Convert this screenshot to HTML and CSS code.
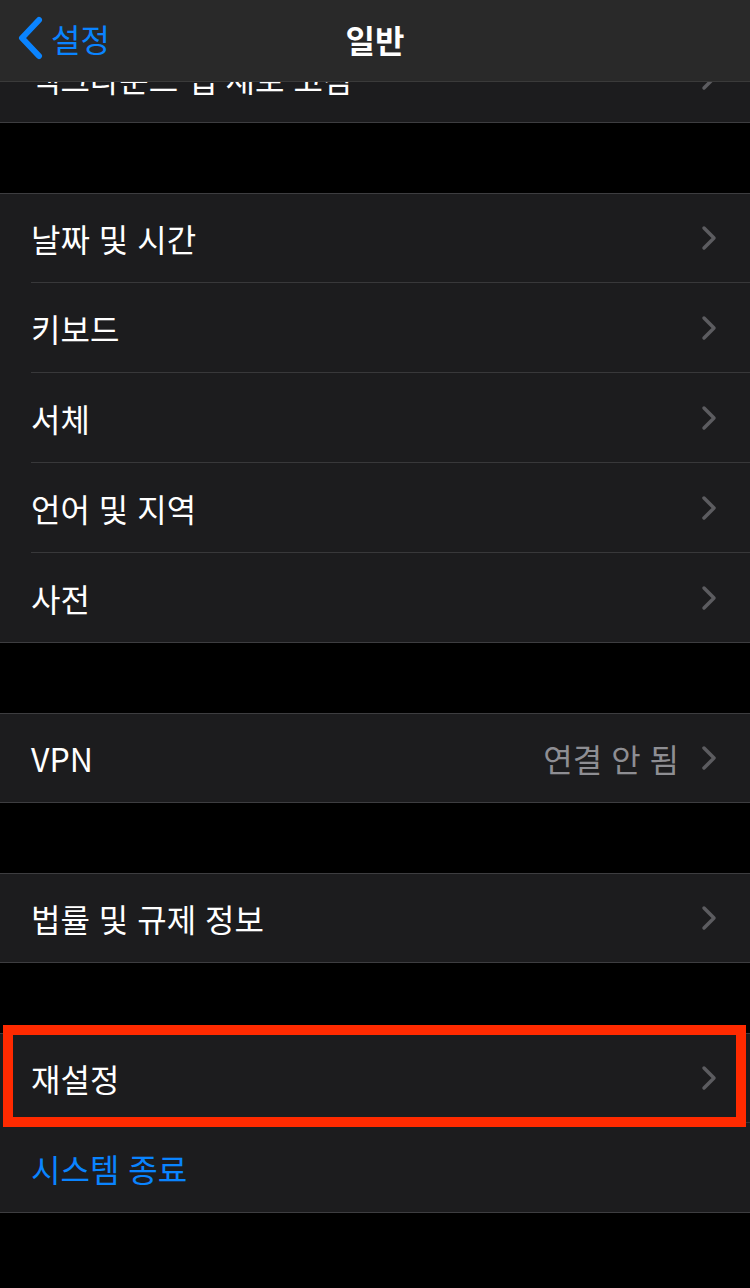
FILE: index.html
```html
<!DOCTYPE html>
<html lang="ko">

<head>
    <meta charset="UTF-8">
    <meta name="viewport" content="width=device-width, initial-scale=1.0">
    <title>일반</title>
    <link rel="stylesheet" href="styles.css">
</head>

<body>

    <div class="screen">
        <header class="navbar">
            <a class="back" href="#">
                <svg class="back-icon" width="26" height="44" viewBox="0 0 26 44">
                    <path d="M22 4 L5 22 L22 40" fill="none" stroke="#0a84ff" stroke-width="6" stroke-linecap="round" stroke-linejoin="round" />
                </svg>
                <span>설정</span>
            </a>
            <h1 class="title">일반</h1>
        </header>

        <main class="list">
            <section class="group group-top">
                <div class="row"><div class="row-inner"><span class="label">백그라운드 앱 새로 고침</span><span class="chevron"></span></div></div>
            </section>

            <section class="group">
                <div class="row"><div class="row-inner"><span class="label">날짜 및 시간</span><span class="chevron"></span></div></div>
                <div class="row"><div class="row-inner"><span class="label">키보드</span><span class="chevron"></span></div></div>
                <div class="row"><div class="row-inner"><span class="label">서체</span><span class="chevron"></span></div></div>
                <div class="row"><div class="row-inner"><span class="label">언어 및 지역</span><span class="chevron"></span></div></div>
                <div class="row"><div class="row-inner"><span class="label">사전</span><span class="chevron"></span></div></div>
            </section>

            <section class="group">
                <div class="row"><div class="row-inner"><span class="label">VPN</span><span class="value">연결 안 됨</span><span class="chevron"></span></div></div>
            </section>

            <section class="group">
                <div class="row"><div class="row-inner"><span class="label">법률 및 규제 정보</span><span class="chevron"></span></div></div>
            </section>

            <section class="group">
                <div class="row row-marked">
                    <div class="row-inner"><span class="label">재설정</span><span class="chevron"></span></div>
                    <div class="highlight"></div>
                </div>
                <div class="row"><div class="row-inner"><span class="label label-blue">시스템 종료</span></div></div>
            </section>
        </main>
    </div>

</body>

</html>
```

FILE: styles.css
```css
* {
    margin: 0;
    padding: 0;
    box-sizing: border-box;
}

body {
    background-color: #000;
    font-family: 'Noto Sans CJK KR', 'Noto Sans', sans-serif;
    color: #fff;
}

.screen {
    position: relative;
    width: 750px;
    height: 1288px;
    overflow: hidden;
    background-color: #000;
}

/* barra de navegação por cima da lista */
.navbar {
    position: absolute;
    top: 0;
    left: 0;
    right: 0;
    height: 82px;
    z-index: 2;
    display: flex;
    align-items: center;
    justify-content: center;
    background-color: #292929;
    border-bottom: 1px solid #3a3a3a;
}

.back {
    position: absolute;
    left: 17px;
    top: 16px;
    display: flex;
    align-items: center;
    gap: 8px;
    color: #0a84ff;
    text-decoration: none;
    font-size: 32px;
    line-height: 44px;
}

.back-icon {
    display: block;
}

.title {
    font-size: 32px;
    font-weight: 700;
    line-height: 1;
    margin-top: -4px;
}

.list {
    display: flex;
    flex-direction: column;
    gap: 70px;
    padding-top: 33px;
}

.group {
    background-color: #1c1c1e;
    border-top: 1px solid #3d3d40;
    border-bottom: 1px solid #3d3d40;
}

.group-top {
    border-top: none;
}

.row {
    position: relative;
    padding-left: 31px;
}

.row-inner {
    display: flex;
    align-items: center;
    height: 90px;
    padding-right: 33px;
    border-top: 1px solid #38383a;
}

.row:first-child .row-inner {
    height: 88px;
    border-top: none;
}

.group-top .row:first-child .row-inner {
    height: 89px;
}

.label {
    flex: 1;
    font-size: 32px;
    line-height: 1;
    color: #fff;
}

.label-blue {
    color: #0a84ff;
}

.value {
    font-size: 32px;
    line-height: 1;
    color: #8e8e93;
    margin-right: 22px;
}

.chevron {
    width: 16px;
    height: 26px;
    background: url("data:image/svg+xml,%3Csvg xmlns='http://www.w3.org/2000/svg' width='16' height='26' viewBox='0 0 16 26'%3E%3Cpath d='M3 3 L13 13 L3 23' fill='none' stroke='%235c5c60' stroke-width='3.5' stroke-linecap='round' stroke-linejoin='round'/%3E%3C/svg%3E") no-repeat center;
}

/* moldura vermelha sobre a linha */
.highlight {
    position: absolute;
    z-index: 1;
    left: 3px;
    right: 4px;
    top: -9px;
    bottom: -5px;
    border: 10px solid #ff2a00;
    pointer-events: none;
}
```
